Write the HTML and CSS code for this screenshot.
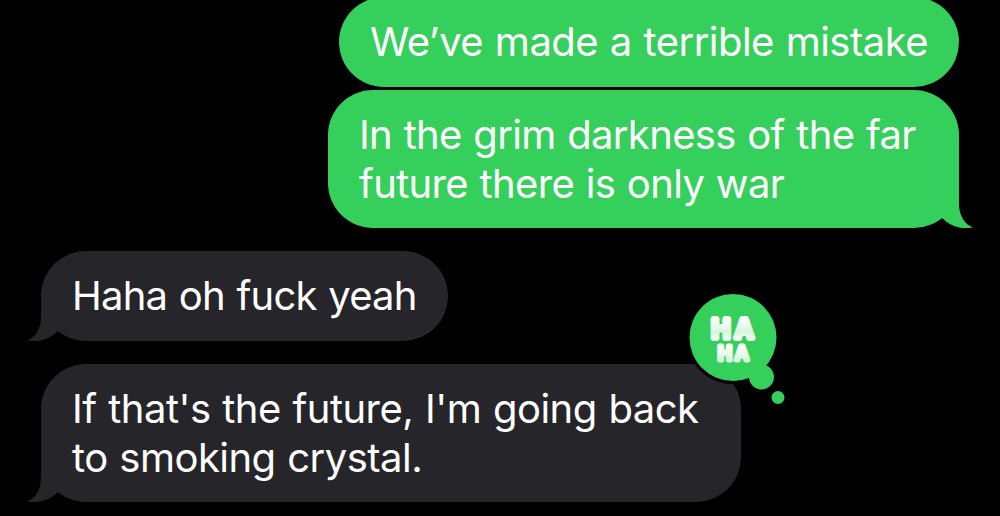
FILE: index.html
```html
<!DOCTYPE html>
<html lang="en">
<head>
  <meta charset="UTF-8">
  <meta name="viewport" content="width=device-width, initial-scale=1.0">
  <title>Messages</title>
  <link rel="stylesheet" href="styles.css">
</head>
<body>
  <main class="thread">
    <div class="bubble sent first">
      <p class="line l1">We’ve made a terrible mistake</p>
    </div>

    <div class="bubble sent second">
      <p class="line l2">In the grim darkness of the far</p>
      <p class="line l3">future there is only war</p>
      <svg class="tail" viewBox="0 0 48 48">
        <path d="M0 0H33V24C33 35 38 44 47 47.6C34 49.5 24 46 16 38L0 20Z"/>
      </svg>
    </div>

    <div class="bubble received third">
      <p class="line l4">Haha oh fuck yeah</p>
      <svg class="tail" viewBox="0 0 48 48">
        <path d="M0 0H33V24C33 35 38 44 47 47.6C34 49.5 24 46 16 38L0 20Z"/>
      </svg>
    </div>

    <div class="bubble received fourth">
      <p class="line l5">If that's the future, I'm going back</p>
      <p class="line l6">to smoking crystal.</p>
      <svg class="tail" viewBox="0 0 48 48">
        <path d="M0 0H33V24C33 35 38 44 47 47.6C34 49.5 24 46 16 38L0 20Z"/>
      </svg>

      <!-- haha reaction -->
      <svg class="reaction" viewBox="0 0 104 116">
        <defs>
          <linearGradient id="puff" gradientUnits="userSpaceOnUse" x1="0" y1="27" x2="0" y2="54" spreadMethod="repeat">
            <stop offset="0.1" stop-color="#ffffff"/>
            <stop offset="0.6" stop-color="#d8f5de"/>
            <stop offset="0.9" stop-color="#f8fff9"/>
          </linearGradient>
        </defs>
        <circle class="ring" cx="48" cy="48.5" r="46.5"/>
        <circle cx="48" cy="48.5" r="43.5"/>
        <circle cx="76.5" cy="88" r="12.5"/>
        <circle cx="93" cy="108.5" r="6.5"/>
        <text class="haha"><tspan class="big" x="26.6 50.2" y="49 49">HA</tspan><tspan class="small" x="33 50.2" y="70.7 70.7">HA</tspan></text>
      </svg>
    </div>
  </main>
</body>
</html>
```

FILE: styles.css
```css
* {
  margin: 0;
  padding: 0;
  box-sizing: border-box;
}

body {
  background: #000;
  color: #fff;
  font-family: Inter, "Liberation Sans", sans-serif;
  height: 100vh;
  overflow: hidden;
}

.thread {
  display: flex;
  flex-direction: column;
  padding: 0 41px;
}

.bubble {
  position: relative;
  padding: 20px 31px;
  border-radius: 45px;
  font-size: 40px;
  line-height: 49px;
}

.sent {
  align-self: flex-end;
  background: #34d05b;
  fill: #34d05b;
}

.received {
  align-self: flex-start;
  background: #26252a;
  fill: #26252a;
}

.first {
  width: 620px;
  height: 90px;
  margin-top: -3px;
}

.second {
  width: 631px;
  height: 138px;
  margin-top: 3px;
}

.third {
  width: 407px;
  height: 90px;
  margin-top: 23px;
}

.fourth {
  width: 700px;
  height: 138px;
  margin-top: 23px;
}

.line {
  white-space: nowrap;
  word-spacing: 1px;
}

.l1 { letter-spacing: -0.52px; }
.l2 { letter-spacing: -0.66px; }
.l3 { letter-spacing: -0.65px; }
.l4 { letter-spacing: -0.75px; }
.l5 { letter-spacing: -0.52px; }
.l6 { letter-spacing: -0.53px; }

/* tails hang off the bottom outer corner */
.tail {
  position: absolute;
  width: 48px;
  height: 48px;
  right: -15px;
  bottom: 0;
}

.received .tail {
  right: auto;
  left: -15px;
  transform: scaleX(-1);
}

.reaction {
  position: absolute;
  left: 644px;
  top: -75px;
  width: 104px;
  height: 116px;
  fill: #34d05b;
}

.ring {
  fill: #000;
}

.haha {
  font-family: Inter, "Liberation Sans", sans-serif;
  font-weight: 500;
  fill: url(#puff);
  stroke: url(#puff);
  stroke-linejoin: round;
}

.big {
  font-size: 25px;
  stroke-width: 6px;
}

.small {
  font-size: 18.5px;
  stroke-width: 4.8px;
}
```
